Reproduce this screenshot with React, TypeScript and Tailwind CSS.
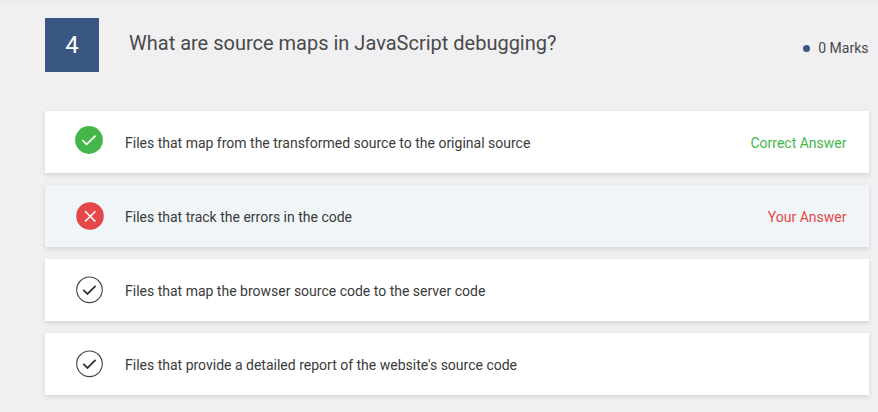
import React from 'react';

type Status = 'correct' | 'wrong' | 'none';

const options: { text: string; status: Status }[] = [
  { text: 'Files that map from the transformed source to the original source', status: 'correct' },
  { text: 'Files that track the errors in the code', status: 'wrong' },
  { text: 'Files that map the browser source code to the server code', status: 'none' },
  { text: "Files that provide a detailed report of the website's source code", status: 'none' },
];

function StatusIcon({ status }: { status: Status }) {
  if (status === 'correct')
    return (
      <svg className="mb-[5px] ml-[30px] size-7" viewBox="0 0 28 28" fill="none">
        <circle cx="14" cy="14" r="13.9" fill="#45b649" />
        <path d="M7.3 14.2l4.3 4.2 8.9-8.8" stroke="#fff" strokeWidth="1.7" />
      </svg>
    );
  if (status === 'wrong')
    return (
      <svg className="ml-[31px] size-7" viewBox="0 0 28 28" fill="none">
        <circle cx="14" cy="14" r="13.8" fill="#e54848" />
        <path d="M9.1 9.2l10.3 10.3M19.4 9.2L9.1 19.5" stroke="#fff" strokeWidth="1.6" />
      </svg>
    );
  return (
    <svg className="ml-[30px] size-7" viewBox="0 0 28 28" fill="none">
      <circle cx="14.5" cy="13.8" r="12.8" stroke="#444" strokeWidth="1.1" />
      <path d="M8.3 13.8l4.2 4.1 8.1-8.1" stroke="#333" strokeWidth="1.8" />
    </svg>
  );
}

export default function App() {
  return (
    <div className="h-[412px] w-[878px] overflow-hidden bg-[#f0f0f3] bg-linear-to-b from-[#ebebee] to-[#f0f0f3] to-[5px] pt-[18px] pl-[45px] font-[Roboto,sans-serif] text-[#3a3a3a] antialiased">
      <header className="flex h-[54px] w-[824px]">
        <div className="flex w-[54px] items-center justify-center bg-[#3a5683] text-2xl text-white">4</div>
        <h1 className="ml-[30px] pt-[10px] text-xl leading-[30px] text-[#4a4a4a]">What are source maps in JavaScript debugging?</h1>
        <div className="mr-[0.5px] ml-auto flex items-center gap-2 pt-[6px] text-sm text-[#4a4a4a]">
          <span className="size-[7px] rounded-full bg-[#3a5683]" />
          0 Marks
        </div>
      </header>
      <ul className="mt-[39px] flex w-[824px] flex-col gap-3">
        {options.map(({ text, status }) => (
          <li key={text} className={`flex h-[62px] items-center shadow-[0_2px_5px_rgba(0,0,0,0.12)] ${status === 'wrong' ? 'bg-[#f0f5f8]' : 'bg-white'}`}>
            <div className="w-20"><StatusIcon status={status} /></div>
            <span className="pt-[2px] text-sm">{text}</span>
            {status === 'correct' && <span className="mr-[22.5px] ml-auto pt-[2px] text-sm text-[#45b649]">Correct Answer</span>}
            {status === 'wrong' && <span className="mr-[22.5px] ml-auto pt-[2px] text-sm text-[#e54848]">Your Answer</span>}
          </li>
        ))}
      </ul>
    </div>
  );
}
